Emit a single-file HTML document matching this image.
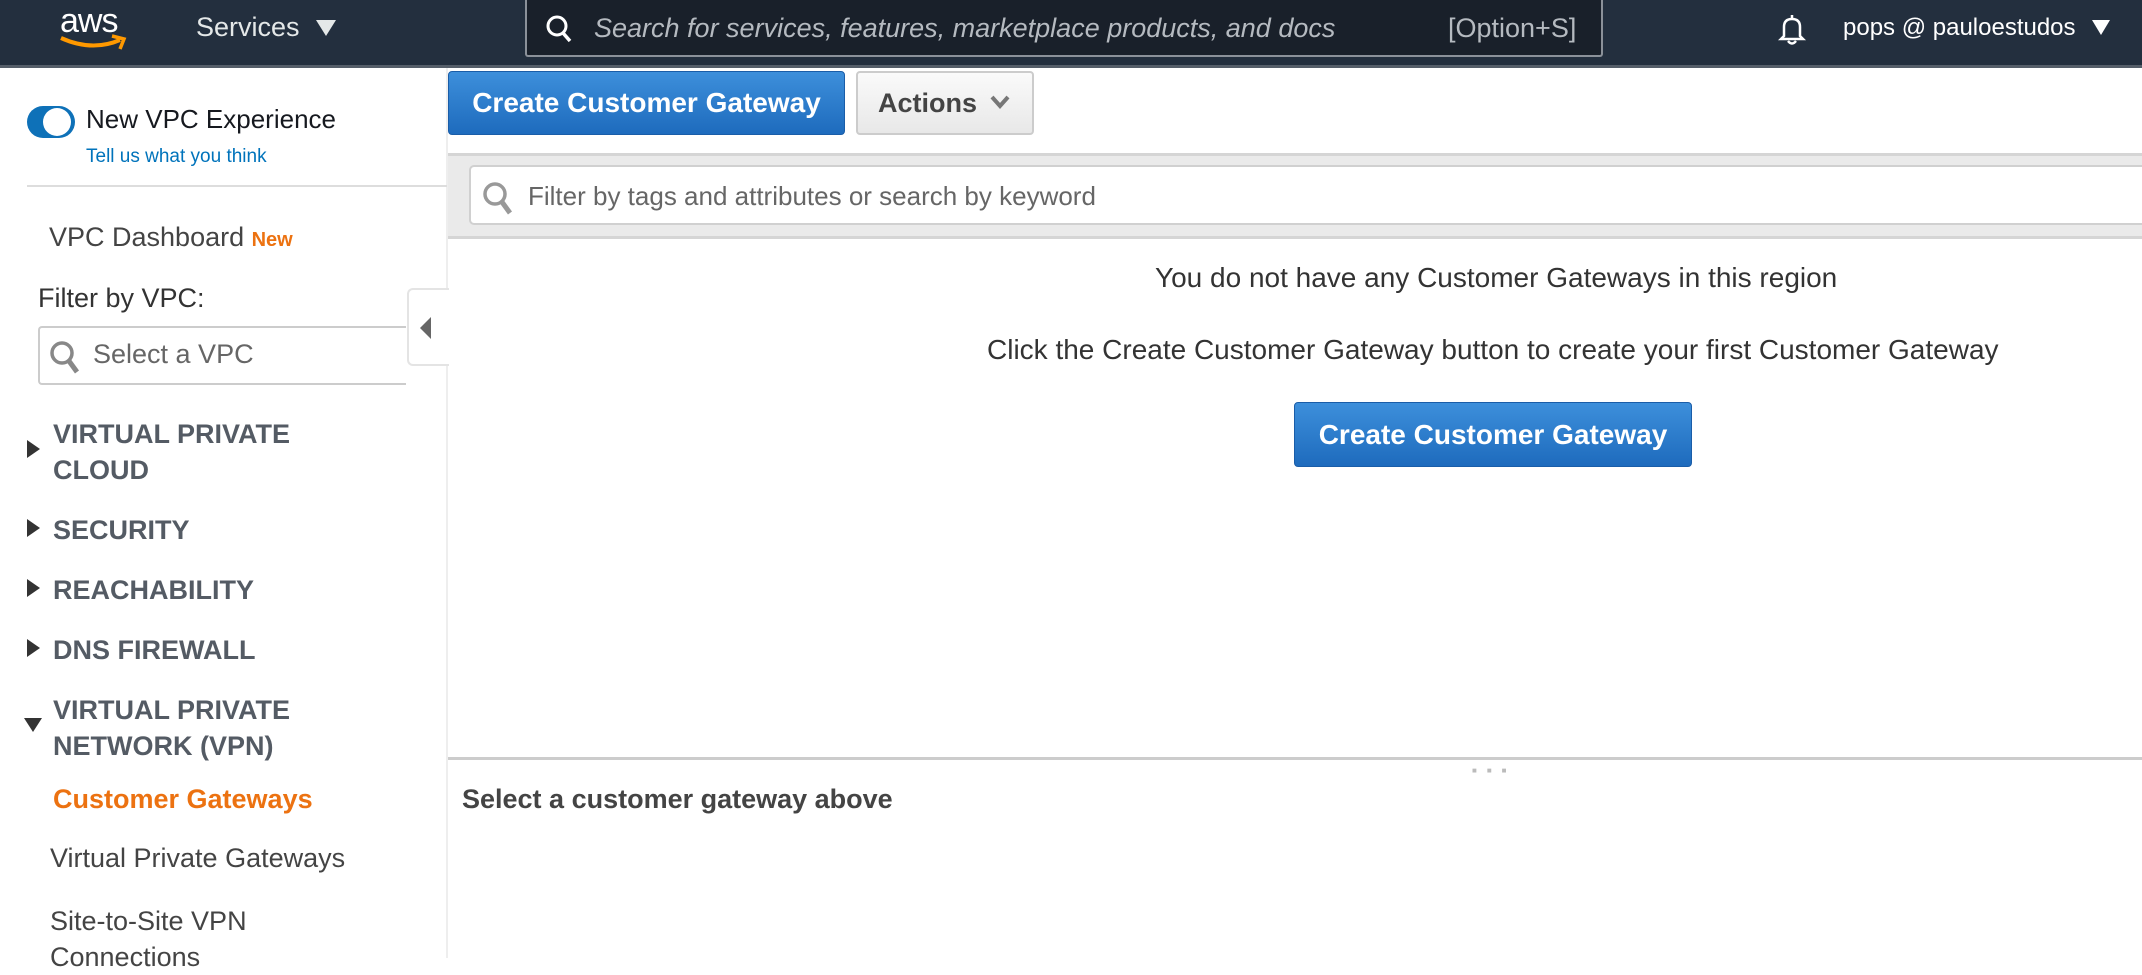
<!DOCTYPE html>
<html><head><style>
*{margin:0;padding:0;box-sizing:border-box}
body{width:2142px;height:958px;overflow:hidden;background:#fff;font-family:"Liberation Sans",Arial,sans-serif;position:relative;color:#333}
.a{position:absolute;white-space:nowrap}
#hdr{position:absolute;left:0;top:0;width:2142px;height:68px;background:#232f3e;border-bottom:3px solid #555e69}
.btn{position:absolute;background:linear-gradient(#3d8fdb,#1e6bbd);border:1px solid #1a5da8;border-radius:4px;color:#fff;font-weight:bold;font-size:28px;text-align:center}
.nav{position:absolute;font-size:27px;font-weight:bold;color:#545b64;left:53px;line-height:36px}
.tri{position:absolute;left:27px;width:0;height:0;border-top:9px solid transparent;border-bottom:9px solid transparent;border-left:13px solid #333}
</style></head><body>
<div id="hdr"></div>
<div class="a" style="left:60px;top:2px;color:#fff;font-size:34px;letter-spacing:-1px">aws</div>
<svg class="a" style="left:58px;top:34px" width="72" height="18"><path d="M3 4 Q34 18 62 6" stroke="#f90" stroke-width="4" fill="none"/><path d="M54 2 L66 5 L62 15" stroke="#f90" stroke-width="3.5" fill="none"/></svg>
<div class="a" style="left:196px;top:12px;color:#e4e8e8;font-size:27px">Services</div>
<div class="a" style="left:316px;top:20px;width:0;height:0;border-left:10px solid transparent;border-right:10px solid transparent;border-top:16px solid #e4e8e8"></div>
<div class="a" style="left:525px;top:0;width:1078px;height:57px;background:#19202a;border:2px solid #8b9199;border-top:none;border-radius:0 0 3px 3px"></div>
<svg class="a" style="left:545px;top:14px" width="30" height="30"><circle cx="12" cy="12" r="9" stroke="#fff" stroke-width="3" fill="none"/><path d="M18 19 L25 27" stroke="#fff" stroke-width="3.5"/></svg>
<div class="a" style="left:594px;top:13px;color:#b5bac0;font-size:27px;font-style:italic">Search for services, features, marketplace products, and docs</div>
<div class="a" style="left:1448px;top:13px;color:#b5bac0;font-size:27px">[Option+S]</div>
<svg class="a" style="left:1776px;top:12px" width="32" height="34"><path d="M16 3 V6 M8 24 V15 Q8 7 16 7 Q24 7 24 15 V24 L27 27 H5 Z M12 29 Q16 34 20 29" stroke="#fff" stroke-width="2.5" fill="none"/></svg>
<div class="a" style="left:1843px;top:14px;color:#fff;font-size:24px">pops @ pauloestudos</div>
<div class="a" style="left:2092px;top:20px;width:0;height:0;border-left:9px solid transparent;border-right:9px solid transparent;border-top:15px solid #fff"></div>

<div class="a" style="left:446px;top:68px;width:2px;height:890px;background:#eee"></div>
<div class="a" style="left:27px;top:106px;width:48px;height:32px;border-radius:16px;background:#0e71b8"></div>
<div class="a" style="left:43px;top:108px;width:28px;height:28px;border-radius:50%;background:#fff"></div>
<div class="a" style="left:86px;top:104px;font-size:26px;color:#16191f">New VPC Experience</div>
<div class="a" style="left:86px;top:146px;font-size:19px;color:#0073bb">Tell us what you think</div>
<div class="a" style="left:27px;top:185px;width:420px;height:2px;background:#ddd"></div>
<div class="a" style="left:49px;top:222px;font-size:27px;color:#444">VPC Dashboard <span style="color:#ec7211;font-weight:bold;font-size:20px">New</span></div>
<div class="a" style="left:38px;top:283px;font-size:27px;color:#333">Filter by VPC:</div>
<div class="a" style="left:38px;top:326px;width:368px;height:59px;border:2px solid #ccc;border-right:none;border-radius:4px 0 0 4px"></div>
<svg class="a" style="left:48px;top:339px" width="36" height="38"><circle cx="14" cy="14" r="10" stroke="#888" stroke-width="3.5" fill="none"/><path d="M21 22 L29 33" stroke="#888" stroke-width="5"/></svg>
<div class="a" style="left:93px;top:339px;font-size:27px;color:#666">Select a VPC</div>
<div class="a" style="left:407px;top:288px;width:42px;height:78px;background:#fff;border:2px solid #e4e4e4;border-right:none;border-radius:6px 0 0 6px"></div>
<div class="a" style="left:420px;top:317px;width:0;height:0;border-top:11px solid transparent;border-bottom:11px solid transparent;border-right:11px solid #666"></div>

<div class="tri" style="top:440px"></div><div class="nav" style="top:416px">VIRTUAL PRIVATE<br>CLOUD</div>
<div class="tri" style="top:519px"></div><div class="nav" style="top:512px">SECURITY</div>
<div class="tri" style="top:579px"></div><div class="nav" style="top:572px">REACHABILITY</div>
<div class="tri" style="top:639px"></div><div class="nav" style="top:632px">DNS FIREWALL</div>
<div class="a" style="left:24px;top:718px;width:0;height:0;border-left:9px solid transparent;border-right:9px solid transparent;border-top:14px solid #333"></div>
<div class="nav" style="top:692px">VIRTUAL PRIVATE<br>NETWORK (VPN)</div>
<div class="nav" style="top:781px;color:#ec7211">Customer Gateways</div>
<div class="a" style="left:50px;top:843px;font-size:27px;color:#444">Virtual Private Gateways</div>
<div class="a" style="left:50px;top:903px;font-size:27px;color:#444;line-height:36px">Site-to-Site VPN<br>Connections</div>

<div class="btn" style="left:448px;top:71px;width:397px;height:64px;line-height:62px">Create Customer Gateway</div>
<div class="a" style="left:856px;top:71px;width:178px;height:64px;border:2px solid #ccc;border-radius:4px;background:linear-gradient(#fafafa,#e8e8e8);font-size:27px;font-weight:bold;color:#444;line-height:60px;padding-left:20px">Actions</div>
<svg class="a" style="left:990px;top:95px" width="20" height="14"><path d="M2 2 L10 11 L18 2" stroke="#777" stroke-width="4" fill="none"/></svg>
<div class="a" style="left:448px;top:153px;width:1694px;height:86px;background:#eaeaea;border-top:3px solid #d5d5d5;border-bottom:3px solid #d5d5d5"></div>
<div class="a" style="left:469px;top:165px;width:1680px;height:60px;background:#fff;border:2px solid #d0d0d0;border-radius:5px"></div>
<svg class="a" style="left:481px;top:180px" width="36" height="40"><circle cx="14" cy="14" r="10" stroke="#999" stroke-width="3.5" fill="none"/><path d="M21 22 L29 33" stroke="#999" stroke-width="5"/></svg>
<div class="a" style="left:528px;top:181px;font-size:26px;color:#666">Filter by tags and attributes or search by keyword</div>
<div class="a" style="left:1155px;top:262px;font-size:28px;color:#333">You do not have any Customer Gateways in this region</div>
<div class="a" style="left:987px;top:334px;font-size:28px;color:#333">Click the Create Customer Gateway button to create your first Customer Gateway</div>
<div class="btn" style="left:1294px;top:402px;width:398px;height:65px;line-height:63px">Create Customer Gateway</div>
<div class="a" style="left:448px;top:757px;width:1694px;height:3px;background:#ccc"></div>
<div class="a" style="left:1472px;top:766px;font-size:8px;color:#bbb;letter-spacing:10px">■■■</div>
<div class="a" style="left:462px;top:784px;font-size:27px;font-weight:bold;color:#444">Select a customer gateway above</div>
</body></html>
